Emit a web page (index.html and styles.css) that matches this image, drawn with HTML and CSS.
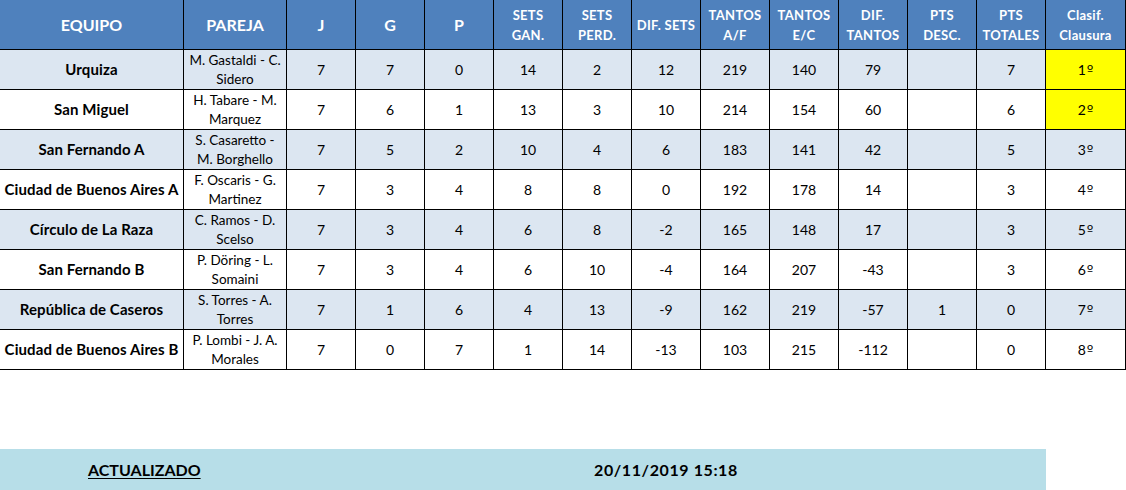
FILE: index.html
```html
<!DOCTYPE html>
<html lang="es">
<head>
<meta charset="utf-8">
<title>Clasificación Clausura</title>
<link rel="stylesheet" href="styles.css">
</head>
<body>
<table class="standings">
  <colgroup>
    <col class="c-team"><col class="c-pair">
    <col class="c-num"><col class="c-num"><col class="c-num"><col class="c-num"><col class="c-num"><col class="c-num">
    <col class="c-num"><col class="c-num"><col class="c-num"><col class="c-num"><col class="c-num">
    <col class="c-pos">
  </colgroup>
  <thead>
    <tr>
      <th class="big">EQUIPO</th>
      <th class="big">PAREJA</th>
      <th class="big">J</th>
      <th class="big">G</th>
      <th class="big">P</th>
      <th>SETS<br>GAN.</th>
      <th>SETS<br>PERD.</th>
      <th>DIF. SETS</th>
      <th>TANTOS<br>A/F</th>
      <th>TANTOS<br>E/C</th>
      <th>DIF.<br>TANTOS</th>
      <th>PTS<br>DESC.</th>
      <th>PTS<br>TOTALES</th>
      <th>Clasif.<br>Clausura</th>
    </tr>
  </thead>
  <tbody>
    <tr class="alt">
      <td class="team">Urquiza</td><td class="pair">M. Gastaldi - C.<br>Sidero</td>
      <td>7</td><td>7</td><td>0</td><td>14</td><td>2</td><td>12</td><td>219</td><td>140</td><td>79</td><td></td><td>7</td><td class="pos top">1<span class="ord">º</span></td>
    </tr>
    <tr>
      <td class="team">San Miguel</td><td class="pair">H. Tabare - M.<br>Marquez</td>
      <td>7</td><td>6</td><td>1</td><td>13</td><td>3</td><td>10</td><td>214</td><td>154</td><td>60</td><td></td><td>6</td><td class="pos top">2<span class="ord">º</span></td>
    </tr>
    <tr class="alt">
      <td class="team">San Fernando A</td><td class="pair">S. Casaretto -<br>M. Borghello</td>
      <td>7</td><td>5</td><td>2</td><td>10</td><td>4</td><td>6</td><td>183</td><td>141</td><td>42</td><td></td><td>5</td><td class="pos">3<span class="ord">º</span></td>
    </tr>
    <tr>
      <td class="team">Ciudad de Buenos Aires A</td><td class="pair">F. Oscaris - G.<br>Martinez</td>
      <td>7</td><td>3</td><td>4</td><td>8</td><td>8</td><td>0</td><td>192</td><td>178</td><td>14</td><td></td><td>3</td><td class="pos">4<span class="ord">º</span></td>
    </tr>
    <tr class="alt">
      <td class="team">Círculo de La Raza</td><td class="pair">C. Ramos - D.<br>Scelso</td>
      <td>7</td><td>3</td><td>4</td><td>6</td><td>8</td><td>-2</td><td>165</td><td>148</td><td>17</td><td></td><td>3</td><td class="pos">5<span class="ord">º</span></td>
    </tr>
    <tr>
      <td class="team">San Fernando B</td><td class="pair">P. Döring - L.<br>Somaini</td>
      <td>7</td><td>3</td><td>4</td><td>6</td><td>10</td><td>-4</td><td>164</td><td>207</td><td>-43</td><td></td><td>3</td><td class="pos">6<span class="ord">º</span></td>
    </tr>
    <tr class="alt">
      <td class="team">República de Caseros</td><td class="pair">S. Torres - A.<br>Torres</td>
      <td>7</td><td>1</td><td>6</td><td>4</td><td>13</td><td>-9</td><td>162</td><td>219</td><td>-57</td><td>1</td><td>0</td><td class="pos">7<span class="ord">º</span></td>
    </tr>
    <tr>
      <td class="team">Ciudad de Buenos Aires B</td><td class="pair">P. Lombi - J. A.<br>Morales</td>
      <td>7</td><td>0</td><td>7</td><td>1</td><td>14</td><td>-13</td><td>103</td><td>215</td><td>-112</td><td></td><td>0</td><td class="pos">8<span class="ord">º</span></td>
    </tr>
  </tbody>
</table>

<div class="updated">
  <span class="updated-label">ACTUALIZADO</span>
  <span class="updated-date">20/11/2019 15:18</span>
</div>
</body>
</html>
```

FILE: styles.css
```css
html, body {
  margin: 0;
  padding: 0;
  background: #ffffff;
}

body {
  font-family: "Lato", "Liberation Sans", sans-serif;
  color: #000000;
  width: 1126px;
  overflow: hidden;
}

.standings {
  table-layout: fixed;
  border-collapse: separate;
  border-spacing: 0;
  width: 1126px;
}

.c-team { width: 184px; }
.c-pair { width: 103px; }
.c-num  { width: 69px; }
.c-pos  { width: 80px; }

.standings th,
.standings td {
  box-sizing: border-box;
  border-right: 1px solid #000000;
  border-bottom: 1px solid #000000;
  padding: 0;
  text-align: center;
  vertical-align: middle;
  overflow: hidden;
  white-space: nowrap;
}

.standings th {
  height: 50px;
  background: #4f81bd;
  color: #ffffff;
  font-size: 13px;
  font-weight: 700;
  line-height: 20px;
  letter-spacing: 0.3px;
}

.standings th.big {
  font-size: 16px;
  letter-spacing: 0;
}

.standings td {
  height: 40px;
  font-size: 14px;
  line-height: 19px;
}

.standings tr.alt td {
  background: #dce6f1;
}

.standings td.team {
  font-weight: 700;
  font-size: 15px;
  letter-spacing: 0.1px;
}

.standings td.pair {
  font-size: 13.5px;
}

.standings tr td.top {
  background: #ffff00;
}

.ord {
  font-family: "DejaVu Sans", sans-serif;
  font-size: 14px;
  margin-left: 1px;
}

.updated {
  display: flex;
  align-items: center;
  margin-top: 79px;
  width: 1046px;
  height: 41px;
  background: #b7dee8;
  font-weight: 700;
  font-size: 16px;
}

.updated-label {
  margin-left: 88px;
  width: 506px;
  text-decoration: underline;
  text-underline-offset: 2px;
}

.updated-date {
  letter-spacing: 0.6px;
}
```
